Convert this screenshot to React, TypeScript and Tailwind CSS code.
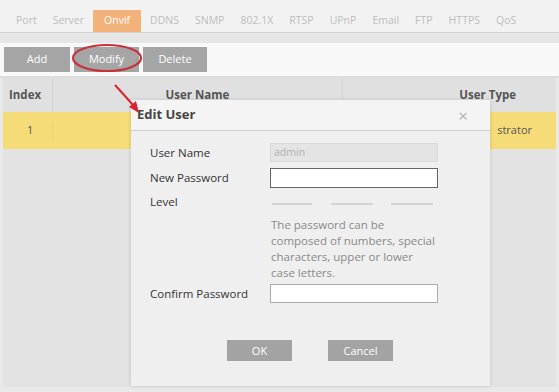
const tabs = ["Port", "Server", "Onvif", "DDNS", "SNMP", "802.1X", "RTSP", "UPnP", "Email", "FTP", "HTTPS", "QoS"];

function FormRow({ label, children, className }: { label: string; children: React.ReactNode; className?: string }) {
  return (
    <div className={"flex items-center " + (className ?? "")}>
      <div className="w-[120px] shrink-0 text-[11.5px] text-[#333]">{label}</div>
      {children}
    </div>
  );
}

export default function App() {
  return (
    <div className="relative h-[392px] w-[559px] overflow-hidden bg-[#e9e9e9] font-['Open_Sans',sans-serif]">
      {/* tab strip */}
      <div className="flex h-[33px] items-end border-b border-[#d2d2d2] bg-[#f2f2f2] pl-[8px]">
        {tabs.map((t) => (
          <div
            key={t}
            className={
              t === "Onvif"
                ? "mx-[1px] flex h-[22px] items-center bg-[#f2b27a] px-[11px] text-[10.5px] text-white"
                : "flex h-[22px] items-center px-[8px] text-[10.5px] text-[#bdbdbd]"
            }
          >
            {t}
          </div>
        ))}
      </div>
      <div className="h-[10px] bg-[#e6e6e6]" />

      {/* toolbar */}
      <div className="flex h-[33px] items-center gap-[4px] bg-[#f8f8f8] pl-[4px]">
        <button className="h-[25px] w-[66px] bg-[#a5a5a5] text-[11px] text-white">Add</button>
        <button className="h-[25px] w-[65px] bg-[#a5a5a5] text-[11px] text-white">Modify</button>
        <button className="h-[25px] w-[64px] bg-[#a5a5a5] text-[11px] text-white">Delete</button>
      </div>
      <div className="h-[2px] bg-[#dcdcdc]" />

      {/* table */}
      <div className="ml-[3px] mr-[3px]">
        <div className="flex h-[34px] items-center bg-[#e0e0e0] text-[11.5px] font-bold text-[#555]">
          <div className="flex h-full w-[50px] items-center border-r border-[#d4d4d4] pl-[6px]">Index</div>
          <div className="flex h-full w-[290px] items-center justify-center border-r border-[#d4d4d4]">User Name</div>
          <div className="flex h-full flex-1 items-center justify-end pr-[40px]">User Type</div>
        </div>
        <div className="flex h-[37px] items-center bg-[#f5dc78] text-[11px] text-[#555]">
          <div className="w-[50px] border-r border-[#ead080] pl-[24px]">1</div>
          <div className="flex-1" />
          {/* only the tail of the type shows beside the dialog */}
          <div className="flex w-[66px] justify-end overflow-hidden pr-[24px]">
            <span className="whitespace-nowrap">strator</span>
          </div>
        </div>
        <div className="h-[238px] bg-[#e3e3e3]" />
      </div>

      {/* modify highlight */}
      <svg className="absolute left-[70px] top-[42px]" width="74" height="32" viewBox="0 0 74 32">
        <ellipse cx="37" cy="16" rx="34" ry="13" fill="none" stroke="#c8303a" strokeWidth="2.2" />
      </svg>

      {/* dialog */}
      <div className="absolute left-[131px] top-[100px] flex h-[286px] w-[359px] flex-col bg-[#efefef] shadow-[0_0_4px_rgba(0,0,0,0.15)]">
        <div className="flex h-[31px] items-center justify-between border-b border-[#cfcfcf] bg-[#f4f4f4] pl-[6px] pr-[22px]">
          <span className="text-[13px] font-bold text-[#444]">Edit User</span>
          <span className="text-[17px] leading-none text-[#b0b0b0]">×</span>
        </div>
        <div className="flex flex-col pl-[19px] pt-[12px]">
          <FormRow label="User Name">
            <div className="flex h-[19px] w-[168px] items-center border border-[#dadada] bg-[#e4e4e4] pl-[3px] text-[10.5px] text-[#b0b0b0]">
              admin
            </div>
          </FormRow>
          <FormRow label="New Password" className="mt-[6px]">
            <div className="h-[20px] w-[168px] border border-[#666] bg-white" />
          </FormRow>
          <FormRow label="Level" className="mt-[5px] !items-start">
            <div className="flex w-[163px] justify-between pt-[10px] pl-[2px]">
              <div className="h-[2px] w-[40px] bg-[#d4d4d4]" />
              <div className="h-[2px] w-[42px] bg-[#d4d4d4]" />
              <div className="h-[2px] w-[42px] bg-[#d4d4d4]" />
            </div>
          </FormRow>
          <div className="ml-[121px] mt-[7px] text-[11.5px] leading-[16px] text-[#8a8a8a]">
            The password can be
            <br />
            composed of numbers, special
            <br />
            characters, upper or lower
            <br />
            case letters.
          </div>
          <FormRow label="Confirm Password" className="mt-[3px]">
            <div className="h-[19px] w-[168px] border border-[#aaa] bg-white" />
          </FormRow>
          <div className="ml-[77px] mt-[37px] flex gap-[36px]">
            <button className="h-[21px] w-[65px] bg-[#a3a3a3] text-[11px] text-white">OK</button>
            <button className="h-[21px] w-[65px] bg-[#a3a3a3] text-[11px] text-white">Cancel</button>
          </div>
        </div>
      </div>

      {/* arrow */}
      <svg className="absolute left-[110px] top-[82px]" width="36" height="36" viewBox="0 0 36 36">
        <line x1="5" y1="3" x2="24" y2="24" stroke="#d9232d" strokeWidth="2" />
        <polygon points="29,31 19,25 26,19" fill="#d9232d" />
      </svg>
    </div>
  );
}
